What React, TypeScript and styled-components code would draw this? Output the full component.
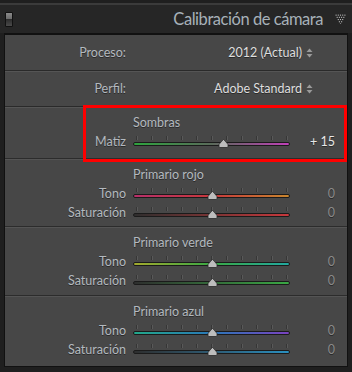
import styled, { createGlobalStyle } from "styled-components";

const Global = createGlobalStyle`
  body {
    margin: 0;
    background: #1f1f1f;
    font-family: Lato, "Noto Sans", sans-serif;
  }
`;

const Frame = styled.div`
  width: 352px;
  height: 372px;
  background: #1f1f1f;
  padding-top: 3px;
  box-sizing: border-box;
  overflow: hidden;
`;

const Header = styled.div`
  height: 30px;
  border-top: 2px solid #3b3b3b;
  background: #262626;
  display: flex;
  align-items: center;
  padding: 0 6px 0 5px;
  box-sizing: border-box;
`;

const Toggle = styled.div`
  width: 8px;
  height: 15px;
  border-radius: 1px;
  border: 1px solid #111;
  background: linear-gradient(#8a8a8a 0%, #6c6c6c 45%, #2d2d2d 50%, #4a4a4a 100%);
  box-sizing: border-box;
`;

const Title = styled.div`
  margin-left: auto;
  font-size: 16.5px;
  letter-spacing: -0.45px;
  color: #a7b1b9;
`;

const Arrow = styled.svg`
  margin-left: 12px;
  width: 11px;
  height: 10px;
`;

const Panel = styled.div`
  margin: 0 4px;
  border: 1px solid #111;
  border-top-width: 2px;
  background: #474747;
  height: 334px;
  box-sizing: border-box;
  position: relative;
`;

const SelectRow = styled.div`
  height: 36px;
  box-sizing: border-box;
  display: grid;
  grid-template-columns: 121px 1fr;
  align-items: center;
  border-bottom: 1px solid #2a2a2a;
  box-shadow: 0 1px 0 #555;
  font-size: 12.5px;
`;

const Label = styled.div`
  text-align: right;
  color: #b3b9bf;
  text-shadow: 0 1px 0 #2a2a2a;
  white-space: nowrap;
`;

const Value = styled.div`
  padding-right: 34px;
  color: #dedede;
  text-shadow: 0 1px 0 #2a2a2a;
  display: flex;
  justify-content: flex-end;
  align-items: center;
  gap: 4px;
`;

const Section = styled.div<{ $h: number; $last?: boolean }>`
  height: ${(p) => p.$h}px;
  padding-top: 7px;
  box-sizing: border-box;
  border-bottom: ${(p) => (p.$last ? "none" : "1px solid #2c2c2c")};
  box-shadow: ${(p) => (p.$last ? "none" : "0 1px 0 #545454")};
  font-size: 12.5px;
`;

const SectionTitle = styled.div`
  padding-left: 128px;
  color: #b3b9bf;
  text-shadow: 0 1px 0 #2a2a2a;
  height: 18px;
  line-height: 18px;
`;

const SliderRow = styled.div`
  display: grid;
  grid-template-columns: 121px 157px 1fr;
  column-gap: 7px;
  align-items: center;
  height: 19px;
  padding-right: 12px;
`;

const Number = styled.div<{ $active?: boolean }>`
  text-align: right;
  color: ${(p) => (p.$active ? "#e8e8e8" : "#8a8a8a")};
  text-shadow: 0 1px 0 #2a2a2a;
`;

const Track = styled.div`
  position: relative;
  height: 12px;
`;

const Ticks = styled.div`
  position: absolute;
  left: 3px;
  right: 3px;
  top: 0;
  height: 4px;
  display: flex;
  justify-content: space-between;
`;

const Tick = styled.span`
  width: 1px;
  height: 4px;
  background: #363636;
  box-shadow: 1px 0 0 #595959;
`;

const Bar = styled.div<{ $grad: string }>`
  position: absolute;
  left: 0;
  right: 0;
  top: 6px;
  height: 4px;
  border-radius: 2px;
  border: 1px solid #1b1b1b;
  box-sizing: border-box;
  background: ${(p) => p.$grad};
`;

const Thumb = styled.svg`
  position: absolute;
  top: 3px;
  width: 11px;
  height: 9px;
  margin-left: -5px;
`;

const Highlight = styled.div`
  position: absolute;
  left: 78px;
  top: 70px;
  width: 264px;
  height: 57px;
  border: 3px solid #f00;
  box-sizing: border-box;
  pointer-events: none;
`;

function UpDown() {
  return (
    <svg width="7" height="10" viewBox="0 0 7 10">
      <path d="M0.5 4 L3.5 0.5 L6.5 4 Z" fill="#9a9a9a" />
      <path d="M0.5 6 L3.5 9.5 L6.5 6 Z" fill="#9a9a9a" />
    </svg>
  );
}

function DottedArrow() {
  const dots: [number, number][] = [];
  for (let row = 0; row < 5; row++) {
    for (let c = 0; c < 5 - row; c++) {
      dots.push([row + c * 2, row * 2]);
    }
  }
  return (
    <Arrow viewBox="-0.5 -0.5 10 9">
      {dots.map(([x, y], i) => (
        <rect key={i} x={x} y={y} width="1" height="1" fill="#b8b8b8" />
      ))}
    </Arrow>
  );
}

type SliderProps = {
  label: string;
  value: number;
  grad: string;
};

function Slider({ label, value, grad }: SliderProps) {
  const pos = ((value + 100) / 200) * 100;
  return (
    <SliderRow>
      <Label>{label}</Label>
      <Track>
        <Ticks>
          {Array.from({ length: 11 }).map((_, i) => (
            <Tick key={i} />
          ))}
        </Ticks>
        <Bar $grad={grad} />
        <Thumb viewBox="0 0 11 9" style={{ left: `${pos}%` }}>
          <path
            d="M5.5 0.5 C6.5 1.5 9 4 10 5.5 L10 7.5 Q10 8.5 9 8.5 L2 8.5 Q1 8.5 1 7.5 L1 5.5 C2 4 4.5 1.5 5.5 0.5 Z"
            fill="#bdbdbd"
            stroke="#2a2a2a"
            strokeWidth="0.8"
          />
        </Thumb>
      </Track>
      <Number $active={value !== 0}>{value > 0 ? `+ ${value}` : value}</Number>
    </SliderRow>
  );
}

const sections = [
  {
    title: "Primario rojo",
    h: 68,
    rows: [
      { label: "Tono", grad: "linear-gradient(90deg, #b8306a, #c8383c 50%, #c8862e)" },
      { label: "Saturación", grad: "linear-gradient(90deg, #2e2e2e, #7a3434 50%, #c8383c)" },
    ],
  },
  {
    title: "Primario verde",
    h: 69,
    rows: [
      { label: "Tono", grad: "linear-gradient(90deg, #a2aa2e, #3aa844 50%, #22a8a0)" },
      { label: "Saturación", grad: "linear-gradient(90deg, #2e2e2e, #346a3a 50%, #3aa844)" },
    ],
  },
  {
    title: "Primario azul",
    h: 70,
    rows: [
      { label: "Tono", grad: "linear-gradient(90deg, #22a88a, #2a78b8 50%, #7a42c0)" },
      { label: "Saturación", grad: "linear-gradient(90deg, #2e2e2e, #2e5a72 50%, #2a90c0)" },
    ],
  },
];

export default function App() {
  return (
    <Frame>
      <Global />
      <Header>
        <Toggle />
        <Title>Calibración de cámara</Title>
        <DottedArrow />
      </Header>
      <Panel>
        <SelectRow>
          <Label>Proceso:</Label>
          <Value>
            2012 (Actual) <UpDown />
          </Value>
        </SelectRow>
        <SelectRow>
          <Label>Perfil:</Label>
          <Value>
            Adobe Standard <UpDown />
          </Value>
        </SelectRow>
        <Section $h={52}>
          <SectionTitle>Sombras</SectionTitle>
          <Slider
            label="Matiz"
            value={15}
            grad="linear-gradient(90deg, #2ea43e, #5a6a5a 50%, #c040b8)"
          />
        </Section>
        {sections.map((s, i) => (
          <Section key={s.title} $h={s.h} $last={i === sections.length - 1}>
            <SectionTitle>{s.title}</SectionTitle>
            {s.rows.map((r) => (
              <Slider key={r.label} label={r.label} value={0} grad={r.grad} />
            ))}
          </Section>
        ))}
        <Highlight />
      </Panel>
    </Frame>
  );
}
